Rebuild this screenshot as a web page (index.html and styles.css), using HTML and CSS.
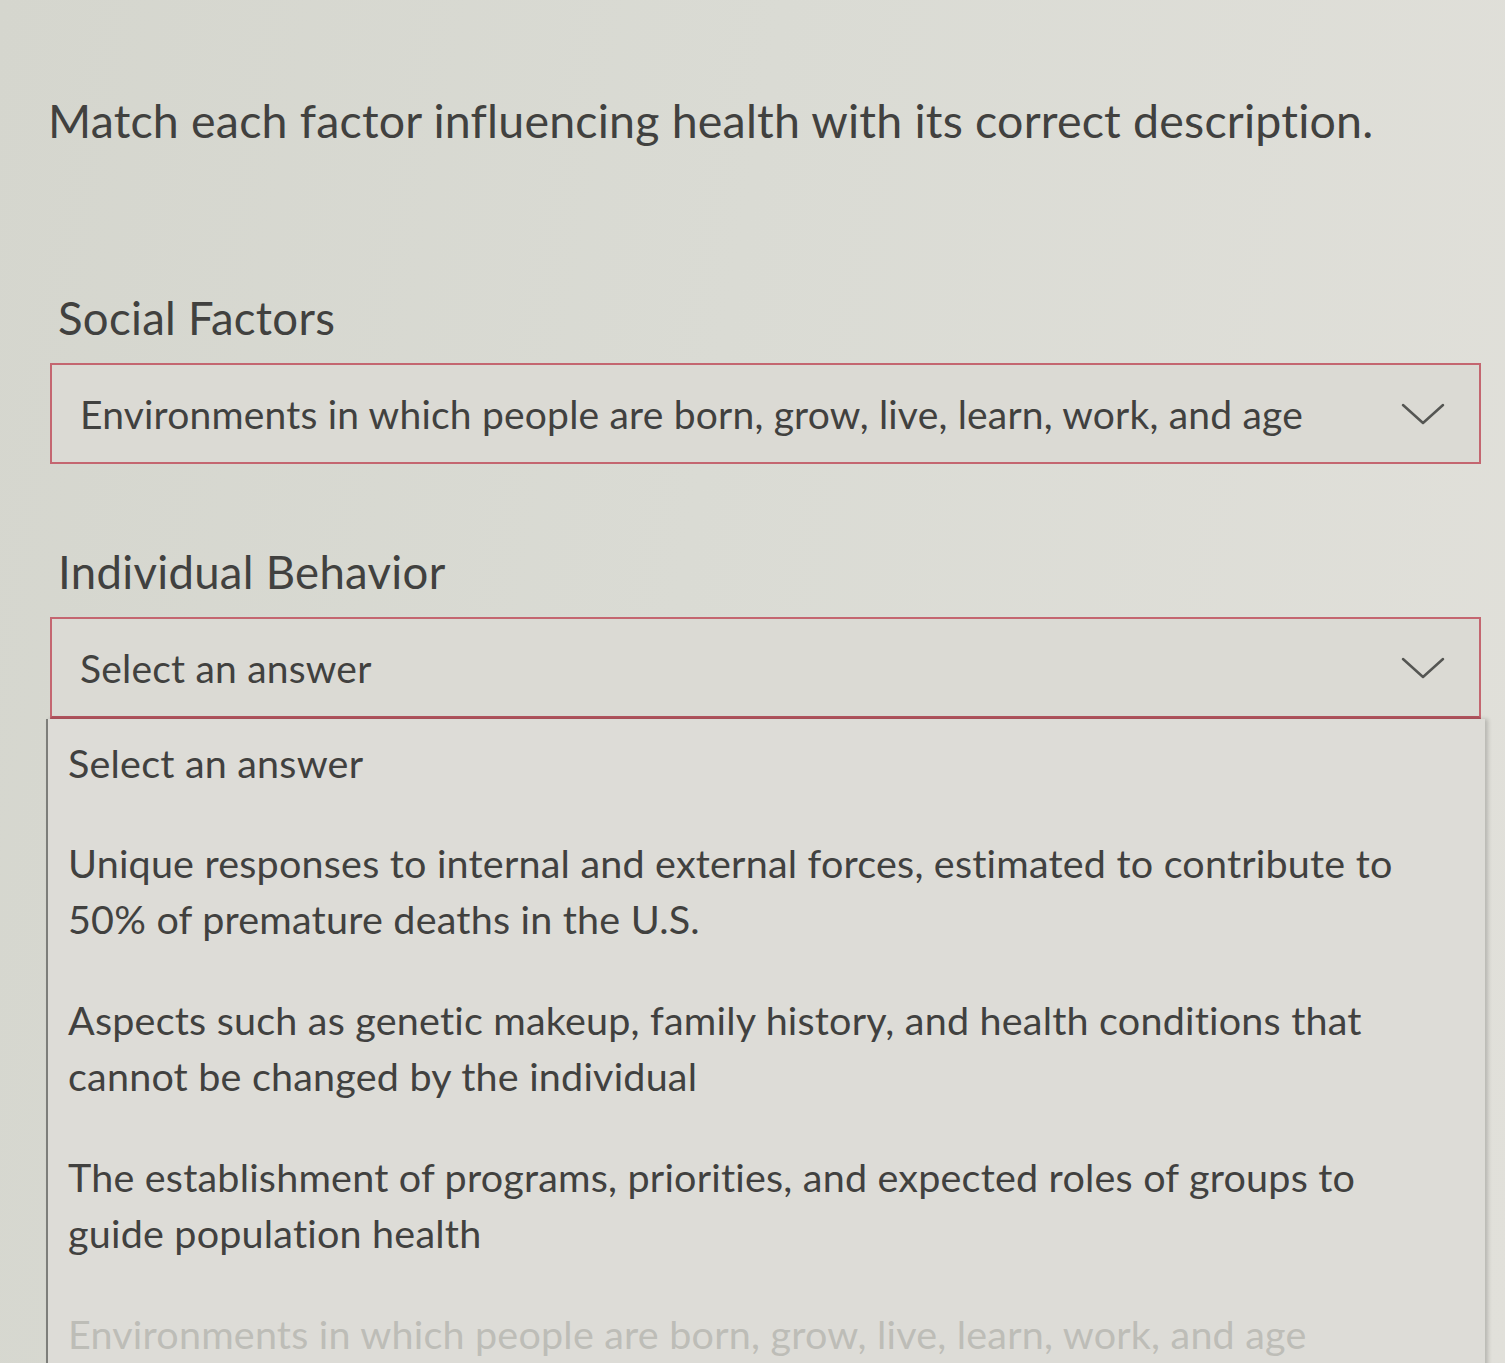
FILE: index.html
```html
<!DOCTYPE html>
<html lang="en">
<head>
<meta charset="utf-8">
<title>Match factors</title>
<link rel="stylesheet" href="styles.css">
</head>
<body>
<main class="page">
  <h1 class="prompt">Match each factor influencing health with its correct description.</h1>

  <section class="item">
    <div class="item-label">Social Factors</div>
    <div class="select">
      <span class="select-value">Environments in which people are born, grow, live, learn, work, and age</span>
      <svg class="chevron" viewBox="0 0 44 24" aria-hidden="true"><path d="M2 3 L22 21 L42 3"/></svg>
    </div>
  </section>

  <section class="item item-open">
    <div class="item-label">Individual Behavior</div>
    <div class="select select-open">
      <span class="select-value">Select an answer</span>
      <svg class="chevron" viewBox="0 0 44 24" aria-hidden="true"><path d="M2 3 L22 21 L42 3"/></svg>
    </div>
    <ul class="menu">
      <li class="option option-placeholder">Select an answer</li>
      <li class="option">Unique responses to internal and external forces, estimated to contribute to 50% of premature deaths in the U.S.</li>
      <li class="option">Aspects such as genetic makeup, family history, and health conditions that cannot be changed by the individual</li>
      <li class="option">The establishment of programs, priorities, and expected roles of groups to guide population health</li>
      <li class="option option-faded">Environments in which people are born, grow, live, learn, work, and age</li>
    </ul>
  </section>
</main>
</body>
</html>
```

FILE: styles.css
```css
html, body {
  margin: 0;
  padding: 0;
}

body {
  height: 1363px;
  overflow: hidden;
  background: linear-gradient(100deg, #d5d6ce 0%, #dadbd4 45%, #e1e0da 100%);
  font-family: Lato, "Open Sans", "DejaVu Sans", sans-serif;
  color: #41413f;
}

.page {
  padding: 92px 24px 0 50px;
}

.prompt {
  margin: 0 0 0 -2px;
  font-size: 46.5px;
  font-weight: 400;
  line-height: 56px;
  letter-spacing: 0.2px;
}

.item {
  display: flex;
  flex-direction: column;
}

.item:first-of-type {
  margin-top: 144px;
}

.item + .item {
  margin-top: 82px;
}

.item-label {
  font-size: 45.5px;
  line-height: 52px;
  margin: 0 0 19px 8px;
  letter-spacing: 0.3px;
}

.select {
  display: flex;
  align-items: center;
  justify-content: space-between;
  height: 97px;
  padding: 0 34px 0 28px;
  border: 2px solid #c46670;
  background: #dbdad4;
}

.select-open {
  border-bottom-width: 3px;
  border-bottom-color: #b3545e;
}

.select-value {
  font-size: 39px;
  letter-spacing: 0.2px;
}

.chevron {
  width: 44px;
  height: 24px;
  flex: none;
}

.chevron path {
  fill: none;
  stroke: #555653;
  stroke-width: 2.5;
  stroke-linecap: round;
  stroke-linejoin: round;
}

.menu {
  list-style: none;
  margin: 0 -4px 0 -4px;
  padding: 10px 0 0;
  background: #dddcd7;
  border-left: 2px solid #7d7e7a;
  box-shadow: 3px 0 4px rgba(0, 0, 0, 0.18);
}

.option {
  padding: 22px 60px 23px 20px;
  font-size: 39.5px;
  line-height: 56px;
  letter-spacing: 0.2px;
}

.option-placeholder {
  padding-top: 6px;
  padding-bottom: 22px;
}

.option-faded {
  color: #bdbdb7;
}
```
